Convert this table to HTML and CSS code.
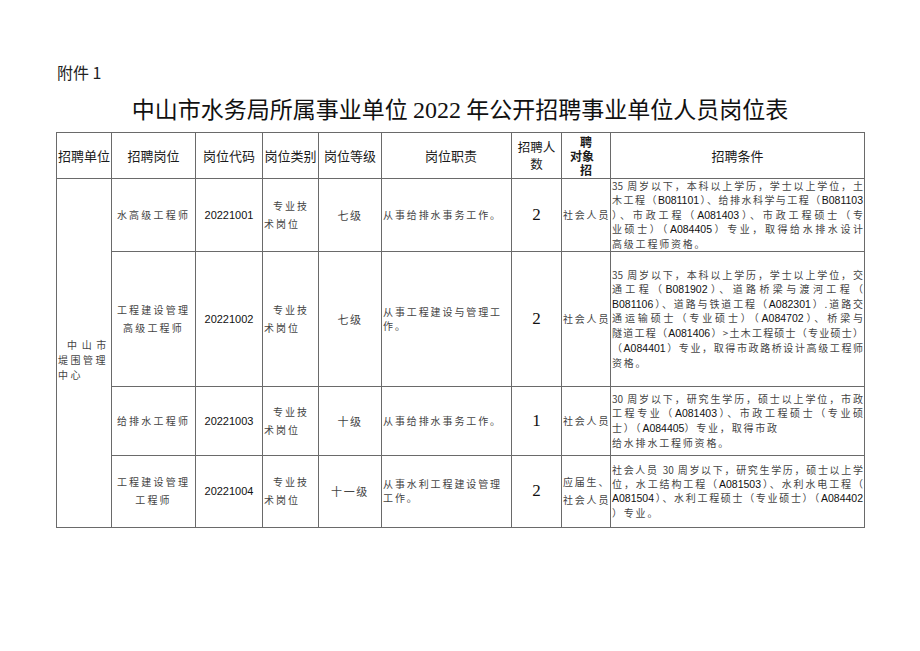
FILE: index.html
```html
<!DOCTYPE html>
<html lang="zh-CN">
<head>
<meta charset="utf-8">
<title>岗位表</title>
<link rel="stylesheet" href="styles.css">
</head>
<body>
<div class="page">
  <div class="attach">附件 1</div>
  <h1 class="title">中山市水务局所属事业单位 <span class="num">2022</span> 年公开招聘事业单位人员岗位表</h1>
  <table class="jobs">
    <colgroup>
      <col class="c1"><col class="c2"><col class="c3"><col class="c4"><col class="c5"><col class="c6"><col class="c7"><col class="c8"><col class="c9">
    </colgroup>
    <thead>
      <tr class="head">
        <th>招聘单位</th>
        <th>招聘岗位</th>
        <th>岗位代码</th>
        <th>岗位类别</th>
        <th>岗位等级</th>
        <th class="duty-h">岗位职责</th>
        <th class="count-h">招聘人<br>数</th>
        <th class="target-h"><span class="t1">聘</span><br><span class="t2">对象</span><br><span class="t3">招</span></th>
        <th>招聘条件</th>
      </tr>
    </thead>
    <tbody>
      <tr class="r1">
        <td rowspan="4" class="unit"><div class="u1">中 山 市</div><div>堤围管理</div><div>中心</div></td>
        <td class="post">水高级工程师</td>
        <td class="code">20221001</td>
        <td class="kind"><div class="k1">专业技</div><div>术岗位</div></td>
        <td class="level">七级</td>
        <td class="duty">从事给排水事务工作。</td>
        <td class="count">2</td>
        <td class="target">社会人员</td>
        <td class="cond">
          <div class="ln">35 周岁以下，本科以上学历，学士以上学位，土</div>
          <div class="ln">木工程（<b>B081101</b>）、给排水科学与工程（<b>B081103</b></div>
          <div class="ln">）、市政工程（<b>A081403</b>）、市政工程硕士（专</div>
          <div class="ln">业硕士）（<b>A084405</b>）专业，取得给水排水设计</div>
          <div class="end">高级工程师资格。</div>
        </td>
      </tr>
      <tr class="r2">
        <td class="post">工程建设管理<br>高级工程师</td>
        <td class="code">20221002</td>
        <td class="kind"><div class="k1">专业技</div><div>术岗位</div></td>
        <td class="level">七级</td>
        <td class="duty">从事工程建设与管理工<br>作。</td>
        <td class="count">2</td>
        <td class="target">社会人员</td>
        <td class="cond">
          <div class="ln">35 周岁以下，本科以上学历，学士以上学位，交</div>
          <div class="ln">通工程（<b>B081902</b>）、道路桥梁与渡河工程（</div>
          <div class="ln"><b>B081106</b>）、道路与铁道工程（<b>A082301</b>）.道路交</div>
          <div class="ln">通运输硕士（专业硕士）（<b>A084702</b>）、桥梁与</div>
          <div class="ln">隧道工程（<b>A081406</b>）&gt;土木工程硕士（专业硕士）</div>
          <div class="ln">（<b>A084401</b>）专业，取得市政路桥设计高级工程师</div>
          <div class="end">资格。</div>
        </td>
      </tr>
      <tr class="r3">
        <td class="post">给排水工程师</td>
        <td class="code">20221003</td>
        <td class="kind"><div class="k1">专业技</div><div>术岗位</div></td>
        <td class="level">十级</td>
        <td class="duty">从事给排水事务工作。</td>
        <td class="count">1</td>
        <td class="target">社会人员</td>
        <td class="cond">
          <div class="ln">30 周岁以下，研究生学历，硕士以上学位，市政</div>
          <div class="ln">工程专业（<b>A081403</b>）、市政工程硕士（专业硕</div>
          <div class="end">士）（<b>A084405</b>）专业，取得市政</div>
          <div class="end">给水排水工程师资格。</div>
        </td>
      </tr>
      <tr class="r4">
        <td class="post">工程建设管理<br>工程师</td>
        <td class="code">20221004</td>
        <td class="kind"><div class="k1">专业技</div><div>术岗位</div></td>
        <td class="level">十一级</td>
        <td class="duty">从事水利工程建设管理<br>工作。</td>
        <td class="count">2</td>
        <td class="target">应届生、<br>社会人员</td>
        <td class="cond">
          <div class="ln">社会人员 30 周岁以下，研究生学历，硕士以上学</div>
          <div class="ln">位，水工结构工程（<b>A081503</b>）、水利水电工程（</div>
          <div class="ln"><b>A081504</b>）、水利工程硕士（专业硕士）（<b>A084402</b></div>
          <div class="end">）专业。</div>
        </td>
      </tr>
    </tbody>
  </table>
</div>
</body>
</html>
```

FILE: styles.css
```css
html, body {
  margin: 0;
  padding: 0;
  background: #ffffff;
}

body {
  font-family: "Noto Sans CJK SC", "Liberation Sans", sans-serif;
  color: #222;
}

.page {
  width: 920px;
  padding-top: 60px;
}

.attach {
  padding-left: 57px;
  font-size: 16px;
  line-height: 24px;
  color: #222;
}

.title {
  margin: 9px 0 7px 0;
  text-align: center;
  font-size: 23px;
  line-height: 30px;
  font-weight: 400;
  color: #111;
}

.title .num {
  font-family: "Liberation Serif", serif;
  font-weight: 400;
  font-size: 24px;
}

.jobs {
  margin-left: 56px;
  border-collapse: collapse;
  table-layout: fixed;
  width: 808px;
}

.c1 { width: 55px; }
.c2 { width: 84px; }
.c3 { width: 67px; }
.c4 { width: 56px; }
.c5 { width: 63px; }
.c6 { width: 130px; }
.c7 { width: 50px; }
.c8 { width: 49px; }
.c9 { width: 254px; }

.jobs th, .jobs td {
  border: 1px solid #6a6a6a;
  padding: 0 1px;
  vertical-align: middle;
}

.head { height: 46px; }
.r1 { height: 72px; }
.r2 { height: 135px; }
.r3 { height: 69px; }
.r4 { height: 72px; }

.jobs th {
  font-size: 13px;
  font-weight: 400;
  line-height: 16px;
  color: #1a1a1a;
  text-align: center;
  white-space: nowrap;
}

.jobs th.duty-h { padding-left: 10px; }

.jobs th.count-h { font-size: 12.5px; line-height: 16.5px; }

.jobs th.target-h {
  font-weight: 700;
  line-height: 14px;
  font-size: 12px;
  text-align: left;
  padding-left: 8px;
}

.target-h .t1, .target-h .t3 { padding-left: 10px; }

.jobs td {
  font-size: 10px;
  letter-spacing: 1.6px;
  line-height: 18px;
  color: #444;
}

.jobs td.unit {
  line-height: 15px;
  text-align: left;
  padding-top: 14px;
  letter-spacing: 2.5px;
  white-space: nowrap;
}

.jobs td.unit .u1 { padding-left: 9px; letter-spacing: 1.2px; }

.jobs td.post { text-align: center; letter-spacing: 2.2px; }

.jobs td.code {
  text-align: center;
  font-family: "Liberation Sans", sans-serif;
  font-size: 11px;
  letter-spacing: 0;
  color: #111;
}

.jobs td.kind { text-align: left; letter-spacing: 2px; }
.jobs td.kind .k1 { padding-left: 9px; }

.jobs td.level { text-align: center; font-size: 11px; }

.jobs td.duty {
  text-align: left;
  line-height: 14px;
  letter-spacing: 1.9px;
}

.jobs td.count {
  text-align: center;
  font-family: "Liberation Serif", serif;
  font-size: 17px;
  letter-spacing: 0;
  color: #111;
}

.jobs td.target { text-align: left; letter-spacing: 1.8px; white-space: nowrap; }

.jobs td.cond {
  line-height: 13.75px;
  letter-spacing: 0;
  padding: 0 1px;
}

.jobs td.cond b {
  font-family: "Liberation Sans", sans-serif;
  font-weight: 400;
  font-size: 10.5px;
  letter-spacing: 0;
  color: #111;
}

.jobs td.cond .ln {
  text-align: justify;
  text-align-last: justify;
  white-space: nowrap;
}

.jobs td.cond .end {
  text-align: left;
  letter-spacing: 1.8px;
}
```
